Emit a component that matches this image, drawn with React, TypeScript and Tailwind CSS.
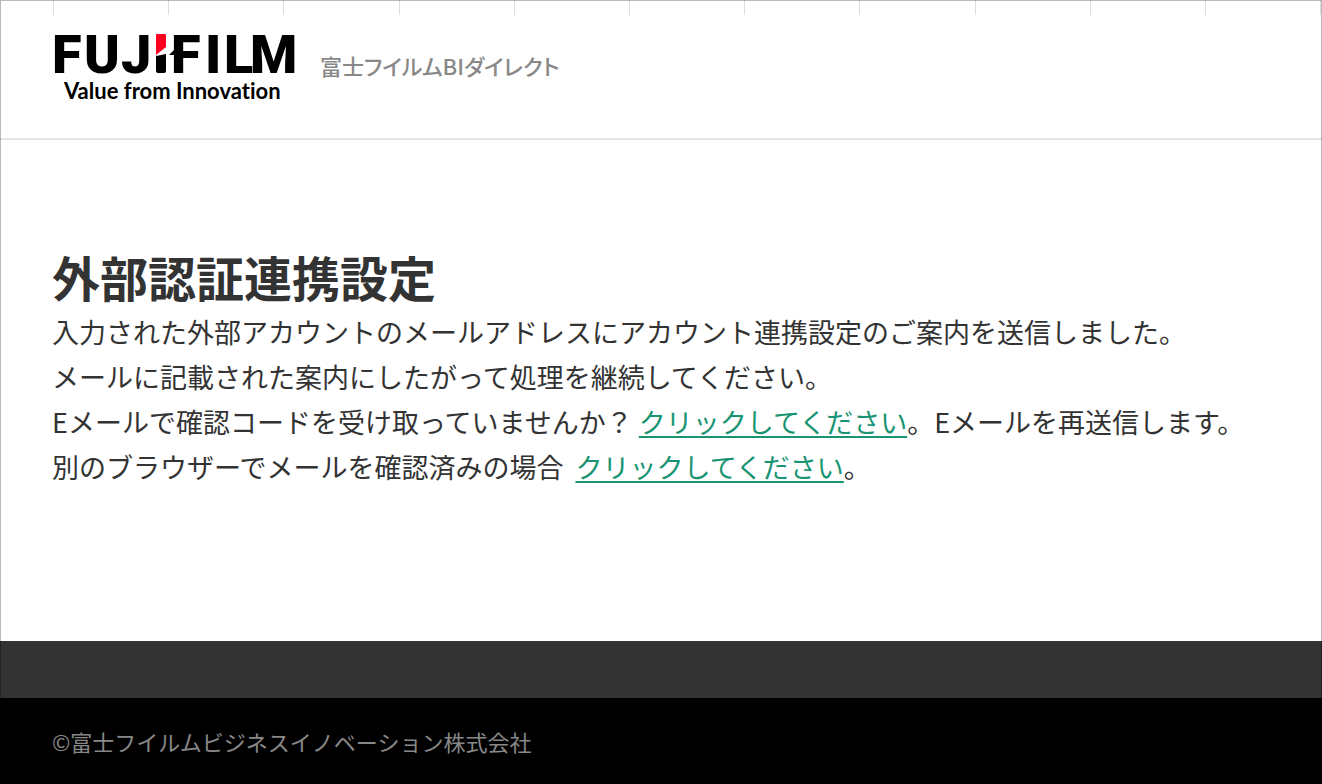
const gridColumns = Array.from({ length: 11 }, (_, i) => i);

function GridRuler() {
  return (
    <div aria-hidden="true" className="flex h-[15px] pl-[53px] pr-px">
      {gridColumns.map((column) => (
        <div key={column} className="flex-1 border-l border-[#dcdcdc] last:border-r" />
      ))}
    </div>
  );
}

function BrandLogo() {
  return (
    <svg
      role="img"
      aria-label="FUJIFILM Value from Innovation"
      viewBox="-2 -10 250 86"
      className="h-[86px] w-[250px] shrink-0"
    >
      <g fill="#000" fontFamily="Roboto, 'Liberation Sans', sans-serif" fontWeight="900" fontSize="54">
        <text x="0 32 69" y="44">FUJ</text>
        <text x="119 153 172 198" y="44">FILM</text>
      </g>
      <path d="M104 6q0-1 1-1h8q1 0 1 1v12l-10 8z" fill="#fb0020" />
      <path d="M104 27l10-2v17q0 2-2 2h-6q-2 0-2-2z" fill="#000" />
      <path d="M117 26l6-6h4v6z" fill="#000" />
      <text
        x="12"
        y="70"
        fill="#000"
        fontFamily="Lato, 'Open Sans', sans-serif"
        fontWeight="700"
        fontSize="22"
        className="[font-variant-ligatures:none]"
      >
        Value from Innovation
      </text>
    </svg>
  );
}

function MessageLink({ children }: { children: string }) {
  return (
    <a
      href="#resend"
      className="ml-1.5 text-[#199473] underline decoration-2 underline-offset-[3px]"
    >
      {children}
    </a>
  );
}

export default function App() {
  return (
    <div
      lang="ja"
      className="relative flex min-h-screen flex-col bg-white font-['Noto_Sans_CJK_JP',sans-serif] text-[#333]"
    >
      <header className="border-b-2 border-[#e5e5e5] pb-[33px]">
        <GridRuler />
        <div className="flex items-center gap-5 pl-[50px] pr-8 pt-1">
          <BrandLogo />
          <p className="pt-1.5 text-[22px] leading-8 font-medium whitespace-nowrap text-[#888] [font-feature-settings:'palt']">
            富士フイルムBIダイレクト
          </p>
        </div>
      </header>

      <main className="px-[52px] pt-[103px] pb-[152px]">
        <h1 className="text-5xl leading-[66px] font-bold">外部認証連携設定</h1>
        <div className="text-[27px] leading-[45px]">
          <p>入力された外部アカウントのメールアドレスにアカウント連携設定のご案内を送信しました。</p>
          <p>メールに記載された案内にしたがって処理を継続してください。</p>
          <p>
            Eメールで確認コードを受け取っていませんか？
            <MessageLink>クリックしてください</MessageLink>
            。Eメールを再送信します。
          </p>
          <p>
            別のブラウザーでメールを確認済みの場合{" "}
            <MessageLink>クリックしてください</MessageLink>。
          </p>
        </div>
      </main>

      <footer className="flex flex-1 flex-col">
        <div className="h-[57px] bg-[#333]" />
        <div className="flex-1 bg-black px-[52px] py-[27px] text-[22px] leading-8 text-[#888]">
          <small className="text-[22px]">©富士フイルムビジネスイノベーション株式会社</small>
        </div>
      </footer>

      <div aria-hidden="true" className="pointer-events-none absolute inset-0 border border-black/27" />
    </div>
  );
}
